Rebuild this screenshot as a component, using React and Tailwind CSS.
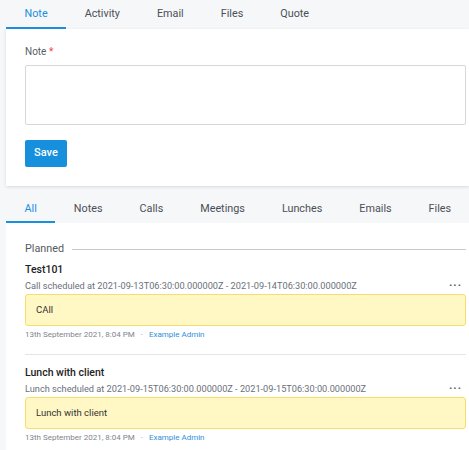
const topTabs = ['Note', 'Activity', 'Email', 'Files', 'Quote'];
const feedTabs = ['All', 'Notes', 'Calls', 'Meetings', 'Lunches', 'Emails', 'Files'];

const activities = [
  {
    id: 1,
    title: 'Test101',
    subtitle: 'Call scheduled at 2021-09-13T06:30:00.000000Z - 2021-09-14T06:30:00.000000Z',
    body: 'CAll',
    date: '13th September 2021, 8:04 PM',
    author: 'Example Admin',
  },
  {
    id: 2,
    title: 'Lunch with client',
    subtitle: 'Lunch scheduled at 2021-09-15T06:30:00.000000Z - 2021-09-15T06:30:00.000000Z',
    body: 'Lunch with client',
    date: '13th September 2021, 8:04 PM',
    author: 'Example Admin',
  },
];

function Tabs({ items, active, className }) {
  return (
    <div className={`flex ${className}`}>
      {items.map((t) => (
        <div
          key={t}
          className={`px-[18.5px] border-b-2 whitespace-nowrap ${t === active ? 'text-[#1a8fdd] border-[#1a8fdd]' : 'text-[#4a4f57] border-transparent'}`}
        >
          {t}
        </div>
      ))}
    </div>
  );
}

function ActivityItem({ a, last }) {
  return (
    <div className={last ? '' : 'border-b border-[#e2e4e8] pb-[12px] mb-[10px]'}>
      <div className="text-[10.5px] font-medium text-[#222] leading-[16px]">{a.title}</div>
      <div className="flex items-center justify-between text-[9.2px] text-[#6b7079] leading-[16px]">
        <span>{a.subtitle}</span>
        <span className="text-[11px] tracking-[1px] text-[#555] mr-[4px] font-bold">···</span>
      </div>
      <div className="bg-[#fff8c5] border border-[#f6dd6c] rounded-[3px] px-[10px] h-[32px] flex items-center text-[9.5px] text-[#333]">
        {a.body}
      </div>
      <div className="mt-[2px] text-[8px] text-[#80858d] leading-[14px]">
        {a.date}
        <span className="mx-[6px]">·</span>
        <span className="text-[#2f8fdc]">{a.author}</span>
      </div>
    </div>
  );
}

export default function App() {
  return (
    <div className="w-[469px] h-[450px] overflow-hidden bg-[#f6f7f9] pl-[6px] font-['Roboto',sans-serif]">
      <Tabs items={topTabs} active="Note" className="text-[10.8px] leading-[26px] pt-[1px]" />
      <div className="bg-white shadow-[0_1px_3px_rgba(0,0,0,0.12)] pl-[19px] pr-[3px] pt-[16px] pb-[19px]">
        <div className="text-[10px] text-[#5a5f66] leading-[14px]">
          Note <span className="text-[#f04444]">*</span>
        </div>
        <textarea className="block mt-[6px] w-full h-[60px] border border-[#d5d7db] rounded-[2px] resize-none" />
        <button className="mt-[15px] bg-[#168fdc] text-white text-[11px] font-medium w-[42px] h-[27px] rounded-[2px]">
          Save
        </button>
      </div>
      <Tabs items={feedTabs} active="All" className="mt-[10px] text-[10.8px] leading-[25px]" />
      <div className="bg-white pl-[19px] pr-[3px] pt-[16px] h-[300px]">
        <div className="flex items-center gap-[8px]">
          <span className="text-[10.8px] text-[#555a61] leading-[20px]">Planned</span>
          <div className="flex-1 border-t border-[#c8cacf]" />
        </div>
        <div className="mt-[3px]">
          {activities.map((a, i) => (
            <ActivityItem key={a.id} a={a} last={i === activities.length - 1} />
          ))}
        </div>
      </div>
    </div>
  );
}
